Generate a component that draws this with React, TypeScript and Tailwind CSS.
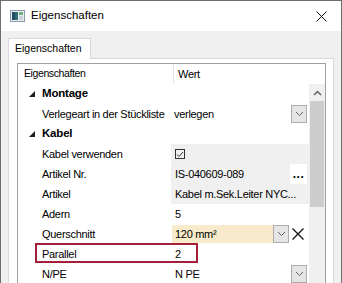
import React from "react";

const font = { fontFamily: '"Liberation Sans", Arial, sans-serif' };

function Chevron() {
  return (
    <svg width="9" height="6" viewBox="0 0 9 6">
      <path d="M1 1 L4.5 4.5 L8 1" fill="none" stroke="#606060" strokeWidth="1" />
    </svg>
  );
}

function DropButton() {
  return (
    <div className="flex h-[18px] w-[16px] items-center justify-center border border-[#adadad] bg-[#e5e5e5]">
      <Chevron />
    </div>
  );
}

function Triangle() {
  return (
    <svg width="6" height="6" viewBox="0 0 6 6" className="mr-[7px]">
      <path d="M6 0 L6 6 L0 6 Z" fill="#1a1a1a" />
    </svg>
  );
}

function Category({ label }: { label: string }) {
  return (
    <div className="flex h-[20px] items-center pl-[11px]">
      <Triangle />
      <span className="text-[11.5px] font-bold tracking-[-0.2px] text-black">{label}</span>
    </div>
  );
}

function Row({
  label,
  children,
  cellClass = "",
}: {
  label: string;
  children?: React.ReactNode;
  cellClass?: string;
}) {
  return (
    <div className="flex h-[20px] items-center">
      <div className="w-[153px] whitespace-nowrap pl-[24px] text-black">{label}</div>
      <div className={"flex h-[20px] flex-1 items-center pr-[2px] " + cellClass}>{children}</div>
    </div>
  );
}

export default function App() {
  return (
    <div
      className="relative h-[283px] w-[342px] overflow-hidden border-x border-t border-[#6e6e6e] bg-[#f0f0f0] text-[11px] tracking-[-0.3px]"
      style={font}
    >
      {/* title bar */}
      <div className="flex h-[30px] items-center bg-white pl-[9px] pr-[14px]">
        <svg width="15" height="12" viewBox="0 0 15 12" className="mr-[6px]">
          <rect x="0.5" y="0.5" width="14" height="11" fill="#e9eef2" stroke="#8c9aa5" />
          <rect x="2" y="2" width="6" height="8" fill="#2f6f73" />
          <rect x="2" y="2" width="3" height="8" fill="#1f4d6b" />
          <rect x="9" y="2" width="4" height="3" fill="#6fb07c" />
          <rect x="9" y="6" width="4" height="4" fill="#c7d3dc" />
        </svg>
        <span className="flex-1 text-[11.5px] tracking-normal text-black">Eigenschaften</span>
        <svg width="11" height="11" viewBox="0 0 11 11">
          <path d="M0.5 0.5 L10.5 10.5 M10.5 0.5 L0.5 10.5" stroke="#111" strokeWidth="1" />
        </svg>
      </div>

      {/* tab area */}
      <div className="px-[7px] pt-[7px]">
        <div className="flex">
          <div className="relative z-10 -mb-px flex h-[21px] w-[83px] items-center border-x border-t border-[#d9d9d9] bg-white pl-[6px] text-[10.5px] tracking-normal text-black">
            Eigenschaften
          </div>
        </div>
        <div className="h-[240px] border border-[#d9d9d9] bg-white pl-[8px] pr-[7px] pt-[4px]">
          <div className="relative h-[240px] border border-[#a0a0a0] bg-white">
            {/* header */}
            <div className="flex h-[20px] items-center">
              <div className="w-[155px] pl-[6px] text-[10.5px] tracking-[-0.4px] text-black">Eigenschaften</div>
              <div className="flex h-[20px] items-center border-l border-[#e3e3e3] pl-[4px] text-black">Wert</div>
            </div>
            <div className="flex">
              <div className="flex-1">
                <Category label="Montage" />
                <Row label="Verlegeart in der Stückliste">
                  <span className="flex-1 pl-[3px]">verlegen</span>
                  <DropButton />
                </Row>
                <Category label="Kabel" />
                <Row label="Kabel verwenden" cellClass="bg-[#f0f0f0]">
                  <div className="ml-[4px] flex h-[10px] w-[10px] items-center justify-center border border-[#333]">
                    <svg width="8" height="7" viewBox="0 0 8 7">
                      <path d="M1 3.5 L3 5.5 L7 1" fill="none" stroke="#333" strokeWidth="1" />
                    </svg>
                  </div>
                </Row>
                <Row label="Artikel Nr." cellClass="bg-[#f0f0f0]">
                  <span className="flex-1 pl-[4px]">IS-040609-089</span>
                  <div className="flex h-[20px] w-[17px] items-end justify-center bg-white pb-[4px] text-[12px] font-bold leading-none tracking-[0.5px]">
                    ...
                  </div>
                </Row>
                <Row label="Artikel" cellClass="bg-[#f0f0f0]">
                  <span className="flex-1 whitespace-nowrap pl-[4px]">Kabel m.Sek.Leiter NYC...</span>
                </Row>
                <Row label="Adern">
                  <span className="pl-[4px]">5</span>
                </Row>
                <Row label="Querschnitt">
                  <div className="ml-px flex h-[18px] w-[117px] items-center bg-[#f8ebcb]">
                    <span className="flex-1 pl-[3px]">120 mm²</span>
                    <DropButton />
                  </div>
                  <div className="flex flex-1 items-center justify-center">
                    <svg width="12" height="12" viewBox="0 0 12 12">
                      <path d="M0.5 0.5 L11.5 11.5 M11.5 0.5 L0.5 11.5" stroke="#111" strokeWidth="1.3" />
                    </svg>
                  </div>
                </Row>
                <Row label="Parallel">
                  <span className="pl-[4px]">2</span>
                </Row>
                <Row label="N/PE">
                  <span className="flex-1 pl-[4px]">N PE</span>
                  <DropButton />
                </Row>
              </div>
              {/* scrollbar */}
              <div className="flex h-[220px] w-[16px] flex-col bg-[#f0f0f0]">
                <div className="flex h-[17px] items-center justify-center">
                  <svg width="9" height="6" viewBox="0 0 9 6">
                    <path d="M1 5 L4.5 1.5 L8 5" fill="none" stroke="#606060" strokeWidth="1.5" />
                  </svg>
                </div>
                <div className="mx-px h-[106px] bg-[#cdcdcd]" />
              </div>
            </div>
            {/* highlight box */}
            <div className="absolute left-[17px] top-[179px] h-[20px] w-[163px] border-2 border-[#a3203a]" />
          </div>
        </div>
      </div>
    </div>
  );
}
